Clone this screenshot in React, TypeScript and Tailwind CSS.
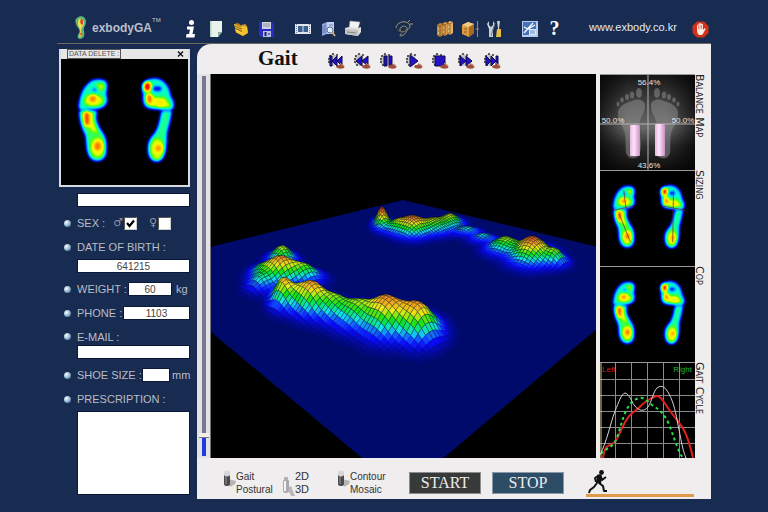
import { useId, type ReactNode } from 'react'

type Blob = { x: number; y: number; rx: number; ry: number; level: number }

// pressure peaks on the ground plane, in view coordinates
const BLOBS: Blob[] = [
  // front foot
  { x: 71, y: 188, rx: 9, ry: 5, level: 0.7 },
  { x: 69, y: 206, rx: 14, ry: 6, level: 0.92 },
  { x: 93, y: 206, rx: 12, ry: 5, level: 0.58 },
  { x: 50, y: 203, rx: 8, ry: 6, level: 0.38 },
  { x: 50, y: 214, rx: 9, ry: 5, level: 0.42 },
  { x: 72, y: 229, rx: 8, ry: 7, level: 0.8 },
  { x: 85, y: 232, rx: 10, ry: 7, level: 0.55 },
  { x: 101, y: 235, rx: 12, ry: 8, level: 0.85 },
  { x: 122, y: 241, rx: 13, ry: 8, level: 0.6 },
  { x: 146, y: 248, rx: 15, ry: 9, level: 0.62 },
  { x: 174, y: 253, rx: 15, ry: 11, level: 0.86 },
  { x: 191, y: 257, rx: 12, ry: 9, level: 0.5 },
  { x: 208, y: 260, rx: 14, ry: 10, level: 0.84 },
  // back foot
  { x: 171, y: 152, rx: 5, ry: 4, level: 1.1 },
  { x: 186, y: 157, rx: 9, ry: 4, level: 0.6 },
  { x: 202, y: 159, rx: 11, ry: 5, level: 0.95 },
  { x: 224, y: 156, rx: 12, ry: 5, level: 0.66 },
  { x: 240, y: 152, rx: 8, ry: 4, level: 0.66 },
  { x: 256, y: 160, rx: 9, ry: 3, level: 0.4 },
  { x: 272, y: 167, rx: 9, ry: 3, level: 0.38 },
  { x: 294, y: 177, rx: 12, ry: 5, level: 0.66 },
  { x: 321, y: 185, rx: 14, ry: 7, level: 1 },
  { x: 344, y: 190, rx: 8, ry: 4, level: 0.62 },
]

const RAMP: [number, number, number, number][] = [
  [0, 0, 10, 106],
  [0.16, 10, 10, 245],
  [0.26, 20, 90, 255],
  [0.36, 20, 225, 240],
  [0.52, 10, 225, 20],
  [0.7, 235, 235, 20],
  [0.86, 240, 150, 30],
  [1.02, 235, 70, 40],
]

function rampColor(t: number) {
  const i = RAMP.findIndex((stop) => stop[0] > t)
  if (i === -1) return 'rgb(235,70,40)'
  const a = RAMP[Math.max(0, i - 1)]
  const b = RAMP[i]
  const k = (t - a[0]) / (b[0] - a[0] || 1)
  const mix = (n: 1 | 2 | 3) => Math.round(a[n] + (b[n] - a[n]) * k)
  return `rgb(${mix(1)},${mix(2)},${mix(3)})`
}

function levelAt(x: number, y: number) {
  let sum = 0
  for (const b of BLOBS) {
    const d = ((x - b.x) / b.rx) ** 2 + ((y - b.y) / b.ry) ** 2
    if (d < 14) sum += (b.level * Math.exp(-d / 2)) ** 1.7
  }
  return Math.min(1.12, sum ** (1 / 1.7))
}

// unit square -> ground quad (top, right, bottom, left)
const TOP = [192, 126]
const RIGHT = [462, 191]
const BOTTOM = [192, 418]
const LEFT = [-79, 192]

function makeProjection() {
  const sx = TOP[0] - RIGHT[0] + BOTTOM[0] - LEFT[0]
  const sy = TOP[1] - RIGHT[1] + BOTTOM[1] - LEFT[1]
  const dx1 = RIGHT[0] - BOTTOM[0]
  const dx2 = LEFT[0] - BOTTOM[0]
  const dy1 = RIGHT[1] - BOTTOM[1]
  const dy2 = LEFT[1] - BOTTOM[1]
  const det = dx1 * dy2 - dx2 * dy1
  const g = (sx * dy2 - dx2 * sy) / det
  const h = (dx1 * sy - sx * dy1) / det
  const a = RIGHT[0] - TOP[0] + g * RIGHT[0]
  const b = LEFT[0] - TOP[0] + h * LEFT[0]
  const d = RIGHT[1] - TOP[1] + g * RIGHT[1]
  const e = LEFT[1] - TOP[1] + h * LEFT[1]
  return (u: number, v: number) => {
    const w = g * u + h * v + 1
    return [(a * u + b * v + TOP[0]) / w, (d * u + e * v + TOP[1]) / w]
  }
}

const STEPS = 104

function buildMesh() {
  const project = makeProjection()
  const nodes: { x: number; y: number; t: number }[][] = []
  for (let i = 0; i <= STEPS; i++) {
    nodes.push([])
    for (let j = 0; j <= STEPS; j++) {
      const [x, y] = project(i / STEPS, j / STEPS)
      const t = levelAt(x, y)
      const scale = 17 + Math.max(0, y - 156) * 0.18
      nodes[i].push({ x, y: y - t * scale, t })
    }
  }
  const cells: { points: string; t: number }[] = []
  for (let s = 0; s < STEPS * 2 - 1; s++) {
    for (let i = Math.max(0, s - STEPS + 1); i <= Math.min(s, STEPS - 1); i++) {
      const j = s - i
      const quad = [nodes[i][j], nodes[i + 1][j], nodes[i + 1][j + 1], nodes[i][j + 1]]
      const t = quad.reduce((sum, n) => sum + n.t, 0) / 4
      if (t < 0.015) continue
      cells.push({ t, points: quad.map((n) => `${n.x.toFixed(1)},${n.y.toFixed(1)}`).join(' ') })
    }
  }
  return cells
}

const MESH = buildMesh()

export default function App() {
  return (
    <div className="min-h-screen bg-[#182b50] px-[57px] pb-3 font-['Liberation_Sans',sans-serif]">
      <Toolbar />
      <div className="flex border-t border-[#6f675f]">
        <PatientPanel />
        <main className="flex min-w-0 flex-1 flex-col self-start rounded-tl-[14px] bg-[#efedee]">
          <Playback />
          <div className="flex">
            <div className="flex h-96 w-3.5 justify-center border-r border-[#777] bg-[#e4e2e6] py-0.5">
              <input
                type="range"
                aria-label="Frame"
                defaultValue={5}
                className="h-full w-[4px] appearance-none bg-[linear-gradient(#77778f_94%,#1c3be0_94%)] [direction:rtl] [writing-mode:vertical-lr] [&::-webkit-slider-thumb]:h-1 [&::-webkit-slider-thumb]:w-2.5 [&::-webkit-slider-thumb]:appearance-none [&::-webkit-slider-thumb]:bg-[#f4f0e4] [&::-webkit-slider-thumb]:shadow-[0_1px_0_#777]"
              />
            </div>
            <div className="h-96 min-w-0 flex-1 bg-black">
              <Surface />
            </div>
            <SideViews />
          </div>
          <Controls />
        </main>
      </div>
    </div>
  )
}

/* ---------- toolbar ---------- */

function Toolbar() {
  return (
    <header className="flex h-[43px] items-center pt-3">
      <div className="flex w-[121px] items-center pl-[17px]">
        <svg width="14" height="24" viewBox="0 0 14 24">
          <path d="M3 2C6-1 12 0 12 6c0 4-3 5-2 9 1 4 0 8-4 8-3 0-3-3-1-6C7 13 3 12 2 8 1 5 1 3 3 2Z" fill="#5bb57a" />
          <path d="M5 3c2-1 5 0 5 4 0 3-3 4-3 8 1 3 1 6-1 6-1 0-1-2 0-4 1-4-2-6-2-9 0-2 0-4 1-5Z" fill="#f0dc50" />
          <path d="M7 3c2 0 2 2 2 4S8 9 7 8 6 4 7 3Z" fill="#d8432c" />
          <circle cx="7" cy="18" r="1.5" fill="#d8702c" />
        </svg>
        <span className="ml-1 text-[12px] font-bold text-[#b9bfca]">exbodyGA</span>
        <span className="self-start text-[6px] text-[#c5cad3]">TM</span>
      </div>

      <Tool label="Information">
        <circle cx="9.500" cy="2.500" r="2.500" fill="#fff" />
        <path d="M5 6.500h7L10.500 14H13l-.5 3.500H4L4.500 14H7l1-4.500H5Z" fill="#fff" />
      </Tool>
      <Tool label="New">
        <path d="M3 1h12v11l-4 5H3Z" fill="#e9f3ee" />
        <path d="M3 1h1.500v16H3Z" fill="#b7d4c6" />
        <path d="m15 12-4 5v-5Z" fill="#86b09d" />
      </Tool>
      <Tool label="Open">
        <path d="M2 4.500 5 3l3 1v1l6-1 2 8-5 4-7-4Z" fill="#b87f0a" />
        <path d="m3 9 7 2.500V7l5-1L16 13l-5 3-7-3.500Z" fill="#f5c02a" />
        <path d="m2 4.500 6 3 5-2M3 7l7 3M4 10l6 3" stroke="#ffe07a" strokeWidth=".8" fill="none" />
        <path d="m3 6 6 3M4 8.500l6 3.500" stroke="#80560a" strokeWidth=".7" />
      </Tool>
      <Tool label="Save">
        <path d="M2 2h13l2 2v13H4l-2-2Z" fill="#2a2bc4" />
        <path d="M5 2h9v7H5Z" fill="#cfd3de" />
        <path d="M6 4h7M6 6h7" stroke="#7c829b" strokeWidth=".8" />
        <path d="M6 11h8v6H6Z" fill="#b8bfe6" />
        <path d="M7.500 12h2v4h-2Z" fill="#1a1c7c" />
        <path d="M11 14h2" stroke="#1a1c7c" />
      </Tool>

      <div className="ml-3 flex">
        <Tool label="Video">
          <path d="M1 4h16v10H1Z" fill="#dfe6ee" />
          <path d="M4 6h4.500v6H4Zm5.500 0H14v6H9.500Z" fill="#3b5f91" />
          <path d="M2.500 4v10M15.500 4v10" stroke="#6f86ab" strokeDasharray="1 1" />
        </Tool>
        <Tool label="Search records">
          <path d="m3 4 5-2v12l-5 2Z" fill="#8ea3d8" />
          <path d="M8 2h7v12H8Z" fill="#c4d0ee" />
          <path d="M4 6v7M6 5v8M10 5h4" stroke="#5c6fae" strokeWidth=".8" />
          <circle cx="11" cy="10" r="3" fill="#e5f0ff" stroke="#5d6c93" />
          <path d="m13 12 3 4" stroke="#c9a877" strokeWidth="2" />
        </Tool>
        <Tool label="Print">
          <path d="m6 1 10 1-2 7-9-1Z" fill="#f3f3f3" stroke="#999" strokeWidth=".5" />
          <path d="m1 8 4-1 9 1 3-1v5l-3 4-13-2Z" fill="#dedede" />
          <path d="m1 9 13 1v6L1 14Z" fill="#c2c2c2" />
          <path d="m3 12 9 1" stroke="#777" strokeWidth=".8" />
        </Tool>
      </div>

      <div className="ml-[26px]">
        <Tool label="Lasso">
          <path
            d="M1 8c0-4 5-7 10-6 5 2 5 6 1 8-4 3-8 2-7-1 1-4 8-4 7 1-1 4-5 6-6 6-2 0-1-2 1-2M13 2l2-2m0 4 3 0"
            stroke="#a69b76"
            strokeWidth="1"
            fill="none"
          />
          <path d="M2 9c2 4 7 4 10 1" stroke="#55574c" fill="none" />
        </Tool>
      </div>

      <div className="ml-4 flex">
        <Tool label="Archive">
          <path d="m1 5 3-2 3 1v11l-3 2-3-2Z" fill="#c4893c" />
          <path d="m6 4 3-2 3 1v11l-3 2-3-2Z" fill="#d79b4a" />
          <path d="m11 3 3-2 3 1v11l-3 2-3-2Z" fill="#e8b163" />
          <path d="m1 5 3 1 3-2v11M6 4l3 1 3-2v11M11 3l3 1 3-2M4 6v11M9 5v11M14 4v11" stroke="#7a4d16" strokeWidth=".7" fill="none" />
          <path d="M2 9h1M7 8h1M12 7h1M2 13h1M7 12h1M12 11h1" stroke="#fff0c8" />
        </Tool>
        <Tool label="Box">
          <path d="m1 5 6-3 6 2v9l-5 4-7-3Z" fill="#dc9d43" />
          <path d="m1 5 7 2 5-3-6-2Z" fill="#f4cb85" />
          <path d="M8 7v10l5-4V4Z" fill="#a66b22" />
          <path d="M3 9h3M3 12h3" stroke="#8c5718" />
          <path d="M16.500 1v16m-2-8h4" stroke="#a08b67" />
        </Tool>
        <Tool label="Tools">
          <path d="M3 1v4l2 2 2-2V1l2 3-2 5v8H3V9L1 4Z" fill="#c7cdd5" />
          <path d="M11 1h3l-1 8h-1Z" fill="#c9ced7" />
          <path d="M11 9h4v8h-5Z" fill="#e4bf44" />
          <path d="m9 3-4 13" stroke="#6e7787" />
        </Tool>
      </div>

      <div className="ml-2.5 flex">
        <Tool label="Analysis">
          <path d="M1 1h16v16H1Z" fill="#b6cdf0" />
          <path d="M2 2h13v13H2Z" fill="#4672bd" />
          <path d="m3 13 9-10M3 7l4 2 7-4" stroke="#fff" strokeWidth="1.200" fill="none" />
          <path d="M8 9h7v6H8Z" fill="#dbe6f7" />
          <path d="M9 11h5M9 13h5" stroke="#5776ac" strokeWidth=".8" />
        </Tool>
        <button type="button" className="w-[25px] font-['Liberation_Serif',serif] text-[20px] leading-[18px] font-bold text-white">
          ?
        </button>
      </div>

      <a href="http://www.exbody.co.kr" className="ml-[22px] text-[11px] text-[#e6e9ef]">
        www.exbody.co.kr
      </a>
      <button type="button" aria-label="Exit" className="mt-1 mr-0.5 ml-auto">
        <svg width="17" height="17" viewBox="0 0 17 17">
          <path d="M5 .5h7L16.500 5v7L12 16.500H5L.5 12V5Z" fill="#cf3219" />
          <path
            d="M5 9V4.500a.7.7 0 0 1 1.400 0V3a.7.7 0 0 1 1.500 0v-.3a.7.7 0 0 1 1.500 0V3.500a.7.7 0 0 1 1.500 0V9l1.300-1.500c.6-.6 1.600 0 1.200.7L11.500 12 10 14H7c-1.500-1-2-3-2-5Z"
            fill="#fbe9e1"
          />
          <path d="M6.500 4v4M8 3.500V8M9.500 4v4" stroke="#cf3219" strokeWidth=".5" />
        </svg>
      </button>
    </header>
  )
}

function Tool({ label, children }: { label: string; children: ReactNode }) {
  return (
    <button type="button" aria-label={label} className="mt-0.5 flex w-[25px] justify-center">
      <svg width="18" height="18" viewBox="0 0 18 18">
        {children}
      </svg>
    </button>
  )
}

/* ---------- patient form ---------- */

function PatientPanel() {
  return (
    <aside className="w-[140px] shrink-0 pt-[5px] pr-[7px] pl-0.5">
      <section className="border-2 border-t-0 border-[#d9dbe0] bg-[#e6e6e8]">
        <div className="flex h-2.5 items-center justify-between pr-1 pl-1.5">
          <button type="button" className="h-2.5 border border-[#555] px-px text-[7px] leading-[8px] whitespace-nowrap text-[#555]">
            DATA DELETE :
          </button>
          <button type="button" aria-label="Close">
            <svg width="7" height="6" viewBox="0 0 7 6">
              <path d="m1 .5 5 5m0-5-5 5" stroke="#111" strokeWidth="1.400" />
            </svg>
          </button>
        </div>
        <Footprints />
      </section>

      <form className="text-[11px] whitespace-nowrap text-[#b9bdc6]">
        <div className="pt-1.5 pl-[18px]">
          <input aria-label="Name" className="block h-3.5 w-full border border-[#0c1838] bg-white px-1 text-center text-[#555]" />
        </div>

        <div className="mt-1 flex h-6 items-center">
          <Bullet />
          <span>SEX :</span>
          <label htmlFor="male" className="ml-2 font-['DejaVu_Sans',sans-serif] text-[#8c93a3]">
            ♂
          </label>
          <Tick id="male" checked />
          <label htmlFor="female" className="ml-3 font-['DejaVu_Sans',sans-serif] text-[#8c93a3]">
            ♀
          </label>
          <Tick id="female" />
        </div>

        <div className="flex h-6 items-center">
          <Bullet />
          <label htmlFor="birth">DATE OF BIRTH :</label>
        </div>
        <div className="pl-[18px]">
          <Field id="birth" value="641215" className="w-full" />
        </div>

        <div className="mt-1 flex h-6 items-center">
          <Bullet />
          <label htmlFor="weight">WEIGHT :</label>
          <Field id="weight" value="60" className="mr-1 ml-auto w-[44px]" />
          <span className="w-3.5">kg</span>
        </div>

        <div className="flex h-6 items-center">
          <Bullet />
          <label htmlFor="phone">PHONE :</label>
          <Field id="phone" value="1103" className="ml-auto w-[67px]" />
        </div>

        <div className="flex h-5 items-end">
          <span className="flex items-center">
            <Bullet />
            <label htmlFor="email">E-MAIL :</label>
          </span>
        </div>
        <div className="pl-[18px]">
          <Field id="email" value="" className="w-full" />
        </div>

        <div className="mt-1 flex h-6 items-center">
          <Bullet />
          <label htmlFor="shoe">SHOE SIZE :</label>
          <Field id="shoe" value="" className="ml-auto w-[28px]" />
          <span className="w-5 pl-0.5">mm</span>
        </div>

        <div className="flex h-6 items-center">
          <Bullet />
          <label htmlFor="prescription">PRESCRIPTION :</label>
        </div>
        <div className="pl-[18px]">
          <textarea id="prescription" className="block h-[84px] w-full resize-none border border-[#0c1838] bg-white p-1 text-[#555]" />
        </div>
      </form>
    </aside>
  )
}

function Bullet() {
  return (
    <span className="mr-1.5 ml-[5px] size-[7px] shrink-0 rounded-full bg-[radial-gradient(circle_at_35%_35%,#fff,#9cc0d8_45%,#2c4c72)]" />
  )
}

function Field({ id, value, className }: { id: string; value: string; className: string }) {
  return (
    <input
      id={id}
      defaultValue={value}
      className={`block h-3.5 border border-[#0c1838] bg-white text-center text-[10px] text-[#444] ${className}`}
    />
  )
}

function Tick({ id, checked = false }: { id: string; checked?: boolean }) {
  return (
    <span className="relative ml-px size-[13px]">
      <input
        id={id}
        type="checkbox"
        defaultChecked={checked}
        className="peer block size-[13px] appearance-none border border-r-[#ccc] border-b-[#ccc] border-t-[#555] border-l-[#555] bg-white"
      />
      <svg viewBox="0 0 13 13" className="pointer-events-none absolute inset-0 hidden peer-checked:block">
        <path d="m3 6 2.500 3L10 3.500" stroke="#000" strokeWidth="2.200" fill="none" />
      </svg>
    </span>
  )
}

/* ---------- pressure maps ---------- */

function Footprints({ axes = false }: { axes?: boolean }) {
  const id = useId()
  return (
    <svg viewBox="0 0 128 127" className="block w-full bg-black">
      <filter id={id} x="0" y="0" width="100%" height="100%" colorInterpolationFilters="sRGB">
        <feGaussianBlur stdDeviation="1.800" />
        <feComponentTransfer>
          <feFuncR type="table" tableValues="0 0 0 0 .3 .95 1 1 1" />
          <feFuncG type="table" tableValues="0 .1 .7 1 1 1 .85 .5 0" />
          <feFuncB type="table" tableValues="0 1 1 .8 .1 0 0 0 0" />
        </feComponentTransfer>
      </filter>
      <g filter={`url(#${id})`}>
        <rect width="128" height="127" fill="#000" />
        <g stroke="#505050" strokeWidth="1">
          {/* left */}
          <path
            d="M29 24c3-3 11-4 16-1 2 4 0 8 0 13 2 5 1 10-3 12-4 3-14 1-20 3-4 0-4-2-3-7 1-8 4-15 10-20Z"
            fill="#646464"
          />
          <path
            d="M19 53h17c-3 7 0 13 5 21 5 6 5 17 3 24-4 6-12 5-15 0-4-8-2-15-4-22-4-7-6-15-6-23Z"
            fill="#747474"
          />
          {/* right */}
          <path
            d="M84 24c4-4 12-5 17-2 6 3 8 10 9 16 4 5 4 11 1 13-8-1-19 0-25-3-4-4-2-9-3-14-1-4-1-8 1-10Z"
            fill="#646464"
          />
          <path
            d="M102 53h9c-1 7-3 14-5 22 0 8 0 18-4 25-5 5-11 3-13-3-2-9-1-15 6-22 5-8 5-15 7-22Z"
            fill="#6c6c6c"
          />
        </g>
        <ellipse cx="40" cy="28" rx="4" ry="4" fill="#909090" />
        <ellipse cx="34" cy="31" rx="3" ry="2" fill="#282828" />
        <ellipse cx="33" cy="42" rx="10" ry="6" fill="#989898" />
        <ellipse cx="32" cy="40" rx="4" ry="4" fill="#dcdcdc" />
        <path d="M21 53h11l1 12 4 10-6-3-7-9Z" fill="#a4a4a4" />
        <ellipse cx="26" cy="60" rx="3" ry="8" fill="#f0f0f0" />
        <ellipse cx="37" cy="89" rx="7" ry="10" fill="#9c9c9c" />
        <ellipse cx="37" cy="88" rx="4" ry="5" fill="#e2e2e2" />
        <ellipse cx="97" cy="30" rx="5" ry="3" fill="#181818" />
        <ellipse cx="87" cy="28" rx="4" ry="5" fill="#fff" />
        <path d="m86 37 8 1 11 1 6 9-9 2-14-3Z" fill="#9c9c9c" />
        <ellipse cx="89" cy="40" rx="3" ry="5" fill="#e8e8e8" />
        <ellipse cx="100" cy="44" rx="4" ry="3" fill="#b4b4b4" />
        <ellipse cx="97" cy="91" rx="7" ry="11" fill="#989898" />
        <ellipse cx="98" cy="90" rx="4" ry="4" fill="#d4d4d4" />
      </g>
      {axes && (
        <g stroke="#7a2a20" strokeWidth="1" fill="none">
          <path d="m32 26 3 24M19 53l25-6M26 58l15 38" />
          <path d="m99 26-1 70M84 47l31 6" />
        </g>
      )}
    </svg>
  )
}

function Surface() {
  return (
    <svg viewBox="0 0 385 384" preserveAspectRatio="xMidYMid slice" className="block h-full w-full">
      <rect width="385" height="384" fill="#000" />
      <polygon points={[TOP, RIGHT, BOTTOM, LEFT].join(' ')} fill="#000a6a" />
      {MESH.map((cell) => (
        <polygon
          key={cell.points}
          points={cell.points}
          fill={rampColor(cell.t)}
          stroke={cell.t > 0.24 ? '#06141c' : rampColor(cell.t)}
          strokeWidth={cell.t > 0.24 ? 0.3 : 0.6}
        />
      ))}
    </svg>
  )
}

function SideViews() {
  return (
    <div className="ml-1 flex w-[111px] shrink-0 flex-col">
      <SideView label="Balance Map">
        <BalanceMap />
      </SideView>
      <SideView label="Sizing">
        <Footprints axes />
      </SideView>
      <SideView label="Cop">
        <Footprints />
      </SideView>
      <SideView label="Gait Cycle">
        <GaitCycle />
      </SideView>
    </div>
  )
}

function SideView({ label, children }: { label: string; children: ReactNode }) {
  return (
    <section className="flex h-24">
      <div className="w-[95px] overflow-hidden border-t border-[#999] bg-black">{children}</div>
      <h2 className="font-['DejaVu_Sans',sans-serif] text-[11px] leading-[9px] whitespace-nowrap text-[#222] [font-variant:small-caps] [writing-mode:vertical-rl]">
        {label}
      </h2>
    </section>
  )
}

function BalanceMap() {
  return (
    <svg viewBox="0 0 95 95" className="block w-full">
      <defs>
        <linearGradient id="panel" x2="0" y2="1">
          <stop offset="0" stopColor="#161616" />
          <stop offset=".55" stopColor="#6a6a6a" />
          <stop offset=".75" stopColor="#2e2e2e" />
          <stop offset="1" stopColor="#0c0c0c" />
        </linearGradient>
        <linearGradient id="edge">
          <stop offset="0" stopColor="#000" stopOpacity=".7" />
          <stop offset=".3" stopColor="#000" stopOpacity="0" />
          <stop offset=".7" stopColor="#000" stopOpacity="0" />
          <stop offset="1" stopColor="#000" stopOpacity=".7" />
        </linearGradient>
        <linearGradient id="bar">
          <stop offset="0" stopColor="#e9b4e2" />
          <stop offset=".4" stopColor="#ffe6fb" />
          <stop offset="1" stopColor="#c98fc4" />
        </linearGradient>
        <g id="sole" fill="#8a8a8a" fillOpacity=".55">
          <path d="M18 38c0-7 7-10 14-12 7-3 13-1 13 5 0 8-6 12-6 21 1 9 3 17 1 26-2 7-12 7-14 0-1-9 1-17-3-25-3-5-5-9-5-15Z" />
          <ellipse cx="39" cy="18" rx="3" ry="5" />
          <ellipse cx="32" cy="20" rx="2.200" ry="3.500" />
          <ellipse cx="27" cy="22" rx="2" ry="3" />
          <ellipse cx="22" cy="25" rx="1.800" ry="2.800" />
          <ellipse cx="18" cy="29" rx="1.500" ry="2.500" />
        </g>
      </defs>
      <rect width="95" height="95" fill="url(#panel)" />
      <rect width="95" height="95" fill="url(#edge)" />
      <use href="#sole" />
      <use href="#sole" transform="matrix(-1 0 0 1 96 0)" />
      <path d="M48 0v95M0 49h95" stroke="#b4b4b4" strokeWidth="1" />
      <rect x="30" y="50" width="10" height="31" rx="1" fill="url(#bar)" />
      <rect x="55" y="49" width="10" height="32" rx="1" fill="url(#bar)" />
      <g fill="#e4e4e4" fontSize="8" textAnchor="middle">
        <text x="49" y="10">56.4%</text>
        <text x="49" y="93">43.6%</text>
        <text x="13" y="48">50.0%</text>
        <text x="83" y="48">50.0%</text>
      </g>
    </svg>
  )
}

function GaitCycle() {
  return (
    <svg viewBox="0 0 95 95" className="block w-full">
      <path
        d="M15.500 0v95M31.500 0v95M47.500 0v95M63.500 0v95M79.500 0v95M0 16.500h95M0 32.500h95M0 48.500h95M0 64.500h95M0 80.500h95"
        stroke="#8a8a8a"
        strokeWidth="1"
      />
      <path d="M1 0v95" stroke="#d8cf80" />
      <g fill="none">
        <path d="M3 95C4 88 5 84 8 83c5-2 8-4 10-9 4-9 7-17 13-23 7-5 9-7 13-11 6-4 9-7 14-7 4 2 6 6 8 9 5 8 9 12 14 19 5 6 9 16 13 34" stroke="#e01f1f" strokeWidth="2" />
        <path d="M1 91c4-5 11-7 14-12 4-8 6-19 10-29 3-7 7-13 14-15 6-1 9 4 13 7 8 5 12 9 16 17 5 12 8 23 12 31 2 5 4 5 6 5" stroke="#25e04a" strokeWidth="2" strokeDasharray="3 3" />
        <path d="M0 92C7 78 10 62 15 48c4-9 6-17 10-18 5 1 6 9 10 13 4 5 9 6 13 1 4-6 5-15 9-19 5-4 9 0 12 6 5 9 7 20 9 31 3 13 4 24 8 33" stroke="#d8d0d8" strokeWidth="1" />
      </g>
      <text x="2" y="9" fontSize="8" fill="#c22020">
        Left
      </text>
      <text x="92" y="9" fontSize="8" textAnchor="end" fill="#20b838">
        Right
      </text>
    </svg>
  )
}

/* ---------- playback and bottom bar ---------- */

const PLAYBACK = [
  { label: 'First', d: 'M3 3h2v10H3ZM10 3v10L5 8ZM15 3v10l-5-5Z' },
  { label: 'Rewind', d: 'M9 3v10L3 8ZM15 3v10L9 8Z' },
  { label: 'Pause', d: 'M5 3h3v10H5ZM10 3h3v10h-3Z' },
  { label: 'Play', d: 'M5 2v12l8-6Z' },
  { label: 'Stop playback', d: 'M4 3h10v10H4Z' },
  { label: 'Forward', d: 'M3 3v10l6-5ZM9 3v10l6-5Z' },
  { label: 'Last', d: 'M3 3v10l5-5ZM8 3v10l5-5ZM13 3h2v10h-2Z' },
]

function Playback() {
  return (
    <div className="flex h-[30px] items-center pl-[61px]">
      <h1 className="w-[65px] font-['Liberation_Serif',serif] text-[21px] font-bold text-[#111]">Gait</h1>
      {PLAYBACK.map(({ label, d }) => (
        <button key={label} type="button" aria-label={label} className="mt-1 flex w-[26px] justify-center">
          <svg width="18" height="17" viewBox="0 0 18 17">
            <ellipse cx="6" cy="7" rx="5" ry="6" fill="#c4c4c4" />
            <path d="M2 3h2m1-2h2m2 1h2M1 6h2M1 9h2m0 3h2" stroke="#333" strokeWidth="1.500" />
            <path d={d} fill="#2413c4" stroke="#0d0a4a" strokeWidth="1" />
            <path d="M10 12c2 1 4-2 5-1 2 1 3 2 2 4-3 1-6 1-8-1Z" fill="#9c4f38" />
            <path d="M13 10c1 1 2 2 4 3" stroke="#d99b7c" fill="none" />
          </svg>
        </button>
      ))}
    </div>
  )
}

function Controls() {
  return (
    <footer className="flex h-[41px] items-center pr-[17px] pl-[26px] text-[10px] leading-[13px] text-[#333]">
      <div className="mt-2 flex w-[59px]">
        <Lever label="Gait or postural" up />
        <span className="flex flex-col">
          <span>Gait</span>
          <span>Postural</span>
        </span>
      </div>
      <div className="mt-2 flex w-[55px]">
        <Lever label="2D or 3D" />
        <span className="flex flex-col text-[11px]">
          <span>2D</span>
          <span>3D</span>
        </span>
      </div>
      <div className="mt-2 flex w-[72px]">
        <Lever label="Contour or mosaic" up />
        <span className="flex flex-col">
          <span>Contour</span>
          <span>Mosaic</span>
        </span>
      </div>
      <button
        type="button"
        className="mt-2 h-[22px] w-[72px] border border-[#8c8c8c] bg-[#383a39] font-['Liberation_Serif',serif] text-base leading-5 text-[#ededed]"
      >
        START
      </button>
      <button
        type="button"
        className="mt-2 ml-[11px] h-[22px] w-[72px] border border-[#8799a8] bg-[#2d4c66] font-['Liberation_Serif',serif] text-base leading-5 text-[#ededed]"
      >
        STOP
      </button>
      <div className="mt-auto ml-auto w-[108px] pb-0.5">
        <svg width="20" height="24" viewBox="0 0 20 24" className="ml-0.5">
          <circle cx="13.500" cy="2.500" r="2.400" fill="#111" />
          <path d="M9 5c2-1 4-1 5 1l-1 8-5-1Z" fill="#111" />
          <path
            d="M10 6 7 8l1 4m5-5 1 3 4-3M9 13l-3 4-4 3-1 3m10-10 4 3 1 5h3"
            stroke="#111"
            strokeWidth="2"
            fill="none"
            strokeLinejoin="round"
          />
        </svg>
        <div className="h-[3px] bg-[#e09a4a]" />
      </div>
    </footer>
  )
}

function Lever({ label, up = false }: { label: string; up?: boolean }) {
  return (
    <button type="button" role="switch" aria-checked={up} aria-label={label} className="flex w-[13px] shrink-0">
      {up ? (
        <svg width="13" height="26" viewBox="0 0 13 26">
          <path d="m5 9 8 2-1 3-5 3Z" fill="#b4b4b4" />
          <rect x="1" y="4" width="6" height="12" rx="2.500" fill="#4a4a4a" />
          <ellipse cx="4" cy="3.500" rx="3" ry="3" fill="#d6d6d6" />
          <path d="M3 6v8" stroke="#999" />
        </svg>
      ) : (
        <svg width="13" height="26" viewBox="0 0 13 26">
          <path d="m5 18 4-2 4 10H9Z" fill="#b9b9b9" />
          <rect x="1" y="9" width="6" height="14" rx="2.500" fill="#a9a9a9" />
          <path d="M3 11v10" stroke="#f4f4f4" strokeWidth="2" />
          <path d="M2 8h4" stroke="#777" />
        </svg>
      )}
    </button>
  )
}
